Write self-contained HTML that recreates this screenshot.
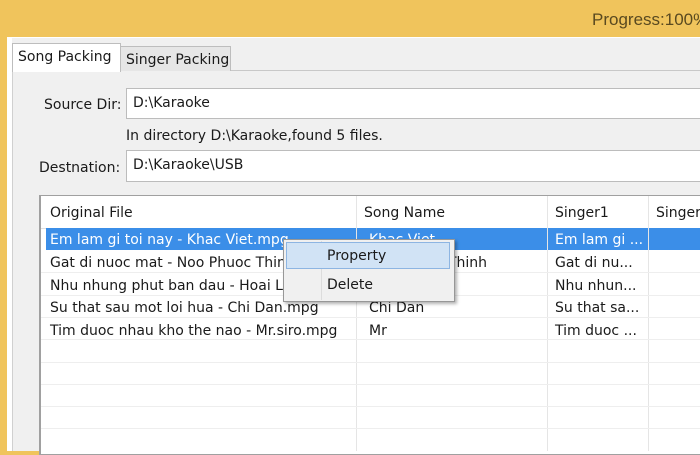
<!DOCTYPE html>
<html><head><style>
*{margin:0;padding:0;box-sizing:border-box}
body{width:700px;height:451px;overflow:hidden;background:#f0c45c;font-family:"DejaVu Sans","Liberation Sans",sans-serif;font-size:14px;color:#1a1a1a;position:relative}
.a{position:absolute}
.t{position:absolute;white-space:nowrap}
</style></head><body>
<div class="t" style="left:592px;top:10px;font-size:17px;color:#5a4a20;font-family:'Liberation Sans',sans-serif">Progress:100%</div>
<div class="a" style="left:7px;top:37px;width:693px;height:414px;background:#fff"></div>
<div class="a" style="left:12px;top:38px;width:688px;height:413px;background:#f0f0f0"></div>
<div class="a" style="left:12px;top:70px;width:688px;height:1px;background:#c8c8c8"></div>
<div class="a" style="left:12px;top:70px;width:1px;height:381px;background:#d0d0d0"></div>
<div class="a" style="left:13px;top:71px;width:687px;height:380px;background:#f0f0f0"></div>
<div class="a" style="left:120px;top:46px;width:111px;height:25px;background:#e6e6e6;border:1px solid #bdbdbd;border-bottom:none"></div>
<div class="t" style="left:126px;top:52px">Singer Packing</div>
<div class="a" style="left:12px;top:43px;width:109px;height:29px;background:#fff;border:1px solid #bdbdbd;border-bottom:none"></div>
<div class="t" style="left:18px;top:49px">Song Packing</div>
<div class="t" style="left:44px;top:97px">Source Dir:</div>
<div class="a" style="left:126px;top:88px;width:580px;height:31px;background:#fff;border:1px solid #bcbcbc"></div>
<div class="t" style="left:133px;top:95px">D:\Karaoke</div>
<div class="t" style="left:126px;top:128px">In directory D:\Karaoke,found 5 files.</div>
<div class="t" style="left:39px;top:160px">Destnation:</div>
<div class="a" style="left:126px;top:150px;width:580px;height:32px;background:#fff;border:1px solid #bcbcbc"></div>
<div class="t" style="left:133px;top:157px">D:\Karaoke\USB</div>
<div class="a" style="left:39px;top:195px;width:670px;height:260px;background:#fff;border:1px solid #a0a0a0;border-left:2px solid #a0a0a0"></div>
<div class="a" style="left:41px;top:228px;width:660px;height:1px;background:#e0e0e0"></div>
<div class="a" style="left:46px;top:228px;width:654px;height:22px;background:#3b8ee8"></div>
<div class="a" style="left:356px;top:196px;width:1px;height:255px;background:#e5e5e5"></div>
<div class="a" style="left:547px;top:196px;width:1px;height:255px;background:#e5e5e5"></div>
<div class="a" style="left:648px;top:196px;width:1px;height:255px;background:#e5e5e5"></div>
<div class="a" style="left:41px;top:272px;width:660px;height:1px;background:#eee"></div>
<div class="a" style="left:41px;top:295px;width:660px;height:1px;background:#eee"></div>
<div class="a" style="left:41px;top:317px;width:660px;height:1px;background:#eee"></div>
<div class="a" style="left:41px;top:339px;width:660px;height:1px;background:#eee"></div>
<div class="a" style="left:41px;top:362px;width:660px;height:1px;background:#eee"></div>
<div class="a" style="left:41px;top:384px;width:660px;height:1px;background:#eee"></div>
<div class="a" style="left:41px;top:406px;width:660px;height:1px;background:#eee"></div>
<div class="a" style="left:41px;top:428px;width:660px;height:1px;background:#eee"></div>
<div class="t" style="left:50px;top:205px">Original File</div>
<div class="t" style="left:364px;top:205px">Song Name</div>
<div class="t" style="left:555px;top:205px">Singer1</div>
<div class="t" style="left:656px;top:205px">Singer2</div>
<div class="t" style="left:50px;top:232px;color:#fff">Em lam gi toi nay - Khac Viet.mpg</div>
<div class="t" style="left:369px;top:232px;color:#fff">Khac Viet</div>
<div class="t" style="left:555px;top:232px;color:#fff">Em lam gi ...</div>
<div class="t" style="left:50px;top:255px">Gat di nuoc mat - Noo Phuoc Thinh.mpg</div>
<div class="t" style="left:369px;top:255px">Noo Phuoc Thinh</div>
<div class="t" style="left:555px;top:255px">Gat di nu...</div>
<div class="t" style="left:50px;top:278px">Nhu nhung phut ban dau - Hoai Lam.mpg</div>
<div class="t" style="left:555px;top:278px">Nhu nhun...</div>
<div class="t" style="left:50px;top:300px">Su that sau mot loi hua - Chi Dan.mpg</div>
<div class="t" style="left:369px;top:300px">Chi Dan</div>
<div class="t" style="left:555px;top:300px">Su that sa...</div>
<div class="t" style="left:50px;top:323px">Tim duoc nhau kho the nao - Mr.siro.mpg</div>
<div class="t" style="left:369px;top:323px">Mr</div>
<div class="t" style="left:555px;top:323px">Tim duoc ...</div>
<div class="a" style="left:283px;top:239px;width:172px;height:63px;background:#f0f0f0;border:1px solid #979797;box-shadow:2px 2px 3px rgba(0,0,0,.3)"></div>
<div class="a" style="left:321px;top:241px;width:1px;height:59px;background:#dcdcdc"></div>
<div class="a" style="left:286px;top:242px;width:164px;height:27px;background:#d1e3f5;border:1px solid #8db5e2"></div>
<div class="t" style="left:327px;top:248px">Property</div>
<div class="t" style="left:327px;top:277px">Delete</div>
</body></html>
